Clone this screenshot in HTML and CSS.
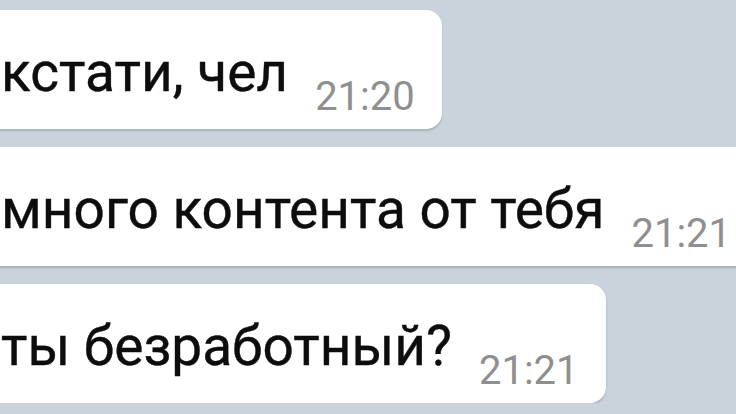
FILE: index.html
```html
<!DOCTYPE html>
<html lang="ru">
<head>
  <meta charset="utf-8">
  <title>Чат</title>
  <link rel="stylesheet" href="styles.css">
</head>
<body>
  <div class="chat">
    <div class="bubble">
      <span class="msg">кстати, чел</span>
      <span class="time">21:20</span>
    </div>
    <div class="bubble">
      <span class="msg">много контента от тебя</span>
      <span class="time">21:21</span>
    </div>
    <div class="bubble">
      <span class="msg">ты безработный?</span>
      <span class="time">21:21</span>
    </div>
  </div>
</body>
</html>
```
FILE: styles.css
```css
body {
  margin: 0;
  background: #cad3db;
  font-family: Roboto, "Noto Sans", sans-serif;
  overflow: hidden;
}

.chat {
  display: flex;
  flex-direction: column;
  align-items: flex-start;
  gap: 18px;
  padding-top: 10px;
  margin-left: -20px;
}

.bubble {
  display: flex;
  align-items: flex-start;
  gap: 27px;
  height: 119px;
  box-sizing: border-box;
  padding: 0 27px 0 21px;
  background: #fff;
  border-radius: 16px;
  box-shadow: 0 2px 2px rgba(60, 80, 100, 0.25);
  white-space: nowrap;
}

.msg {
  font-size: 55px;
  line-height: 1;
  padding-top: 35px;
  color: #0d0d0d;
  -webkit-text-stroke: 0.4px #0d0d0d;
}

.time {
  font-size: 40px;
  line-height: 1;
  margin-top: 67px;
  color: #8f8f8f;
}
```
